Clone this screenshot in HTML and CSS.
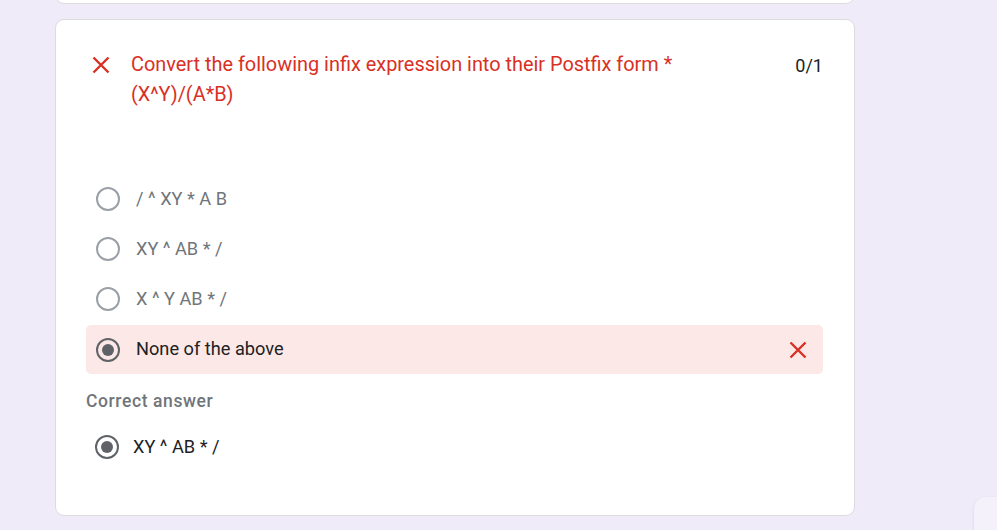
FILE: index.html
```html
<!DOCTYPE html>
<html lang="en">
<head>
<meta charset="utf-8">
<title>Quiz result</title>
<link rel="stylesheet" href="styles.css">
</head>
<body>
<div class="page">
  <div class="prev-card"></div>
  <div class="card">
    <div class="head">
      <svg class="x-icon" width="18" height="18" viewBox="0 0 18 18"><path d="M1.5 1.5L16.5 16.5M16.5 1.5L1.5 16.5" stroke="#d93025" stroke-width="2.4" fill="none"/></svg>
      <div class="title">Convert the following infix expression into their Postfix form <span class="req">*</span><br>(X^Y)/(A*B)</div>
      <div class="score">0/1</div>
    </div>
    <div class="options">
      <div class="opt"><span class="radio"></span><span class="opt-text">/ ^ XY * A B</span></div>
      <div class="opt"><span class="radio"></span><span class="opt-text">XY ^ AB * /</span></div>
      <div class="opt"><span class="radio"></span><span class="opt-text">X ^ Y AB * /</span></div>
      <div class="opt wrong"><span class="radio checked"></span><span class="opt-text">None of the above</span>
        <svg class="x-small" width="18" height="18" viewBox="0 0 18 18"><path d="M1.5 1.5L16.5 16.5M16.5 1.5L1.5 16.5" stroke="#d93025" stroke-width="2.4" fill="none"/></svg>
      </div>
    </div>
    <div class="correct-label">Correct answer</div>
    <div class="correct-opt"><span class="radio checked"></span><span class="opt-text">XY ^ AB * /</span></div>
  </div>
</div>
<div class="fab"></div>
</body>
</html>
```

FILE: styles.css
```css
html, body {
  margin: 0;
  padding: 0;
  background: #f0ebf8;
  height: 100%;
  overflow: hidden;
  font-family: Roboto, "Liberation Sans", sans-serif;
}
.page {
  padding-left: 55px;
  width: 800px;
}
.prev-card {
  margin-top: -20px;
  height: 22px;
  background: #fff;
  border: 1px solid #dadce0;
  border-radius: 9px;
}
.card {
  margin-top: 15px;
  height: 497px;
  box-sizing: border-box;
  background: #fff;
  border: 1px solid #dadce0;
  border-radius: 9px;
  padding: 30px 31px 0 30px;
}
.head {
  display: flex;
  align-items: flex-start;
}
.x-icon {
  margin: 6px 0 0 6px;
  flex: none;
}
.title {
  margin-left: 21px;
  flex: 1;
  color: #d93025;
  font-size: 19.9px;
  line-height: 30px;
}
.score {
  color: #202124;
  font-size: 18px;
  line-height: 32px;
}
.options {
  margin-top: 64px;
  display: flex;
  flex-direction: column;
}
.opt {
  height: 50px;
  display: flex;
  align-items: center;
  padding-left: 10px;
  border-radius: 5px;
}
.opt.wrong {
  background: #fce8e6;
  height: 49px;
  margin-top: 1px;
}
.radio {
  width: 24px;
  height: 24px;
  box-sizing: border-box;
  border: 2px solid #9aa0a6;
  border-radius: 50%;
  flex: none;
  display: flex;
  align-items: center;
  justify-content: center;
}
.radio.checked {
  border-color: #5f6368;
}
.radio.checked::after {
  content: "";
  width: 12px;
  height: 12px;
  border-radius: 50%;
  background: #5f6368;
}
.opt-text {
  margin-left: 16px;
  font-size: 18.2px;
  color: #70757a;
  flex: 1;
  padding-bottom: 2px;
}
.wrong .opt-text {
  color: #202124;
}
.x-small {
  margin-right: 16px;
  flex: none;
}
.correct-label {
  margin-top: 17px;
  font-size: 17.5px;
  font-weight: 500;
  color: #70757a;
  line-height: 20px;
  letter-spacing: 0.6px;
}
.correct-opt {
  margin-top: 21px;
  display: flex;
  align-items: center;
  padding-left: 9px;
  height: 30px;
}
.correct-opt .opt-text {
  margin-left: 14px;
  color: #202124;
}
.fab {
  position: fixed;
  left: 974px;
  top: 497px;
  width: 60px;
  height: 60px;
  background: #f4f1fa;
  border-radius: 12px;
  box-shadow: 0 1px 3px rgba(60, 40, 100, 0.12);
}
```
